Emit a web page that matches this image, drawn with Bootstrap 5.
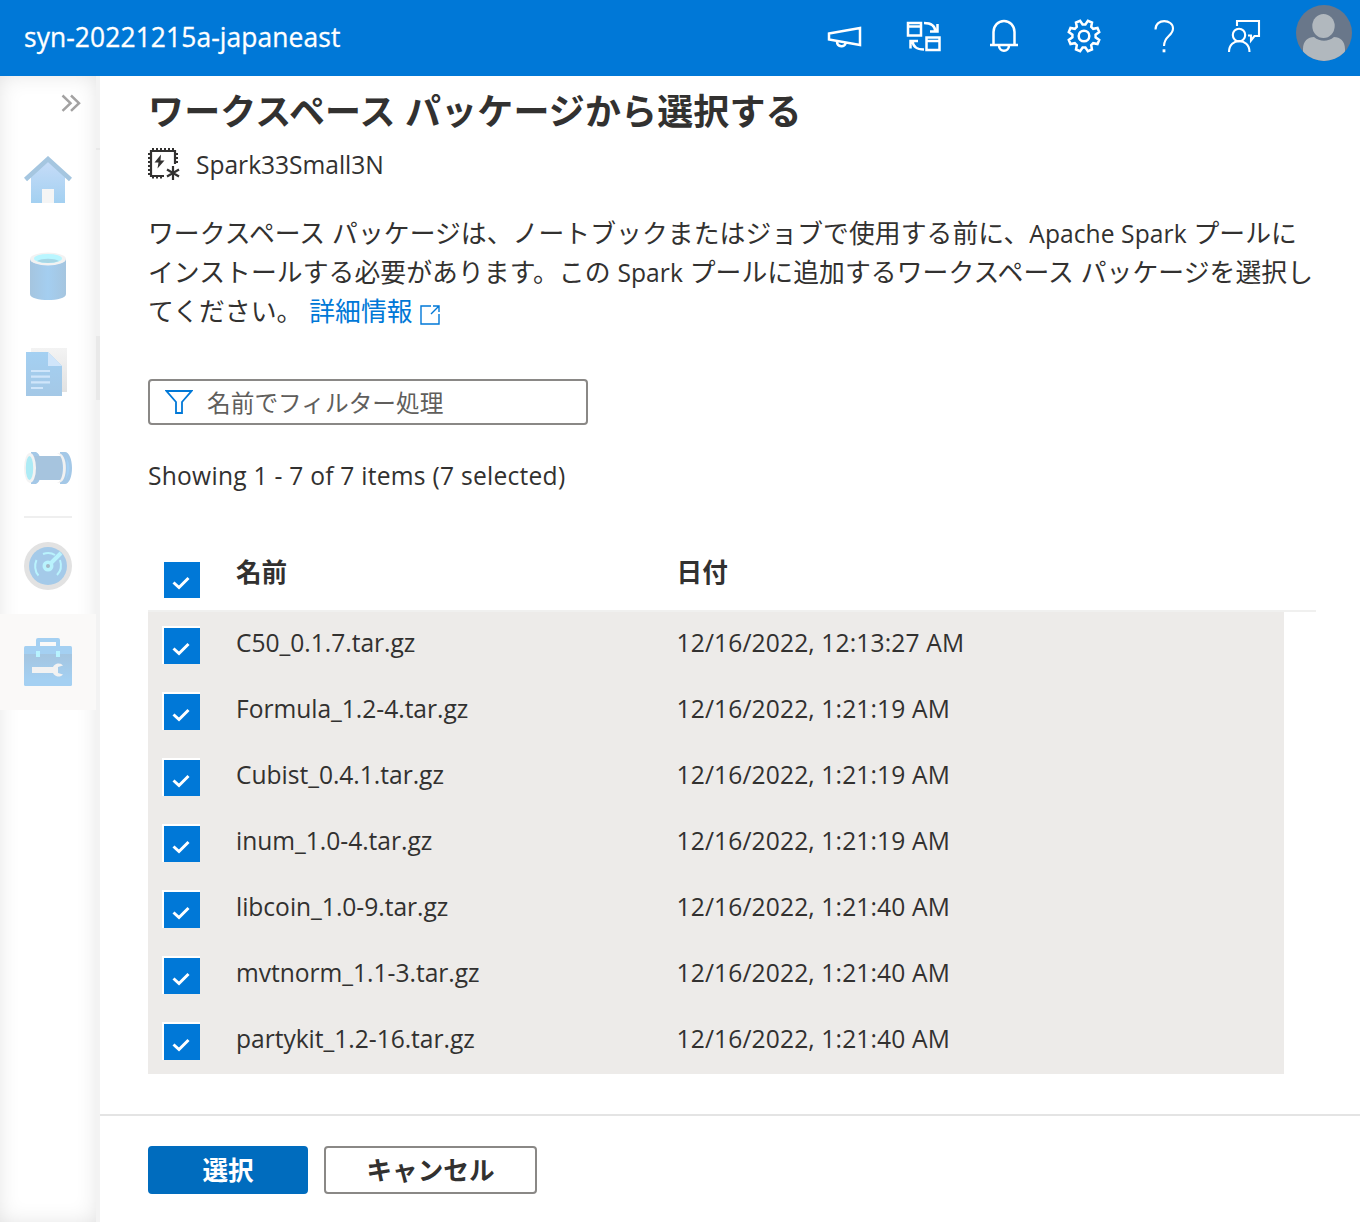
<!DOCTYPE html>
<html lang="ja">
<head>
<meta charset="utf-8">
<title>syn-20221215a-japaneast</title>
<link rel="stylesheet" href="https://cdn.jsdelivr.net/npm/bootstrap@5.3.0/dist/css/bootstrap.min.css">
<style>
body{font-family:"Open Sans","Noto Sans CJK JP",sans-serif;color:#323130;background:#fff;font-size:24.6px;height:1222px;overflow:hidden}
svg{display:block;flex:none}
.topbar{height:76px;background:#0078d7;color:#fff;padding:0 8px 0 24px;flex:none}
.topbar .ws{font-size:26.4px;line-height:36px;letter-spacing:.1px;padding-bottom:3px;-webkit-text-stroke:.3px #fff}
.tools{gap:48px;padding-bottom:4px}
.tools svg{width:32px;height:32px;fill:none;stroke:#fff;stroke-width:2.5;overflow:visible}
.tools svg.fine{stroke-width:2.1}
.tools .avatar{width:56px;height:56px;stroke:none;margin:-6px 0 0 -12px}
.rail{width:100px;flex:none;border-right:4px solid #f3f3f3;position:relative}
.rail-in{height:100%;box-shadow:inset 0 0 26px -6px rgba(0,0,0,.16)}
.rail-notch{position:absolute;left:96px;top:260px;width:4px;height:64px;background:#e9e9e9}
.rail-notch.thin{top:72px;height:2px}
.cell{height:96px}
.cell.active{background:#faf9f8}
.rule{width:48px;height:2px;background:#efefef}
.content{padding:0 44px 0 48px}
h1{font:700 36px/52px "Open Sans","Noto Sans CJK JP",sans-serif;letter-spacing:.13px;margin:10px 0 0;white-space:nowrap}
.pool{height:46px;margin-top:4px;gap:16px}
.pool .nm{line-height:36px;letter-spacing:-.03px}
.desc{font-size:25.8px;line-height:39px;letter-spacing:.075px;margin-top:26px;white-space:nowrap}
.desc .la{font-size:24.6px}
.desc a{color:#0078d7;text-decoration:none}
.desc svg{display:inline-block;vertical-align:-4px}
.filter{width:440px;height:46px;margin-top:48px;border:2px solid #8a8886;border-radius:4px;padding-left:15px;gap:14px;font-size:23.7px;color:#605e5c}
.filter span{padding-top:3px}
.count{margin-top:31px;line-height:40px;height:40px;letter-spacing:.25px}
.grid-head{height:66px;margin-top:50px;width:1168px;border-bottom:2px solid #f0f0ef;font-weight:700;font-size:25.6px}
.grid-row{height:66px;width:1136px;background:#edebe9}
.box{width:36px;height:36px;margin:16px 36px 0 16px;background:#0078d7;flex:none}
.grid-row .box{box-shadow:-1px -1px 0 1px #fff;clip-path:inset(-2px 0 0 -2px)}
.c-name{width:441px;line-height:36px;padding-top:13px;letter-spacing:-.03px}
.c-date{line-height:36px;padding-top:13px;letter-spacing:.13px;margin-left:-.5px}
.grid-head .c-name,.grid-head .c-date{padding-top:9px}
.foot{height:108px;border-top:2px solid #e4e4e4;padding:30px 48px;gap:16px;flex:none}
.foot .btn{height:48px;font-weight:700;font-size:25.6px;line-height:36px;border-radius:4px;padding:5px 0 3px;border-width:2px}
.b-ok{width:160px;background:#006cbe;color:#fff;border-color:#006cbe}
.b-no{width:213px;background:#fff;color:#323130;border-color:#8a8886}
</style>
<script src="https://cdn.jsdelivr.net/npm/bootstrap@5.3.0/dist/js/bootstrap.bundle.min.js"></script>
</head>
<body class="d-flex flex-column">
<svg width="0" height="0" class="position-absolute"><defs>
<symbol id="tick" viewBox="0 0 36 36"><path d="M9.500 20.500l5.500 5L24.500 16" fill="none" stroke="#fff" stroke-width="3"/></symbol>
<linearGradient id="gh" x2="0" y2="1"><stop stop-color="#c6dcf8"/><stop offset="1" stop-color="#a3d0f1"/></linearGradient>
<linearGradient id="gc"><stop stop-color="#a5c5df"/><stop offset=".5" stop-color="#a4cef0"/><stop offset="1" stop-color="#a5c5df"/></linearGradient>
<linearGradient id="gd" x2="0" y2="1"><stop stop-color="#a4d0f2"/><stop offset="1" stop-color="#a4c8e6"/></linearGradient>
<linearGradient id="gp" x2="0" y2="1"><stop stop-color="#f3f3f3"/><stop offset="1" stop-color="#e2e2e2"/></linearGradient>
<linearGradient id="gt" x2="0" y2="1"><stop stop-color="#a4c5e0"/><stop offset="1" stop-color="#a4d0f2"/></linearGradient>
</defs></svg>
<header class="topbar d-flex align-items-center justify-content-between">
  <div class="ws">syn-20221215a-japaneast</div>
  <div class="tools d-flex align-items-center">
    <svg viewBox="0 0 32 32"><path d="M1 13.500L32 8v17L1 19.500zM9 21.500c0 6 8.500 6 8.500 1.500"/></svg>
    <svg viewBox="0 0 32 32"><path d="M0 3h13v12.500H0zM0 6.500h13M18.500 17.500h13V30h-13zM18.500 21h13M16 3c7 0 11 2.500 11.500 8.500M29.500 4v7.500H22M16 29.500c-7 0-11-2.500-11.500-8.500M2.500 28.500V21H10"/></svg>
    <svg viewBox="0 0 32 32"><path d="M2 25h28M5.500 25V12a10.500 11 0 0 1 21 0v13M11 25.500c0 7 10 7 10 0"/></svg>
    <svg viewBox="-16 -16 32 32"><path d="M11.600 1.400L15.200 3.900 13.500 8 9.200 7.200 7.200 9.200 8 13.500 3.900 15.200 1.400 11.600H-1.400L-3.900 15.200-8 13.500-7.200 9.200-9.200 7.200-13.500 8-15.200 3.900-11.600 1.400V-1.400L-15.200-3.900-13.500-8-9.200-7.200-7.200-9.200-8-13.500-3.900-15.200-1.400-11.600H1.400L3.900-15.200 8-13.500 7.200-9.200 9.200-7.200 13.500-8 15.200-3.900 11.600-1.400z"/><circle r="5.300"/></svg>
    <svg class="fine" viewBox="0 0 32 32"><path d="M7.500 9.500C7.500-2 25-1 25 8.500 25 16 16 16 16 26"/><path d="M16 29.300v3" stroke-width="2.800"/></svg>
    <svg class="fine" viewBox="0 0 32 32"><circle cx="11" cy="15" r="6.200"/><path d="M1 32c0-14.500 20.500-14.500 20.500 0M9 6V1h22v15h-4.500L23 20.500V15.500h-3"/></svg>
    <svg class="avatar" viewBox="0 0 56 56"><clipPath id="av"><circle cx="28" cy="28" r="28"/></clipPath><g clip-path="url(#av)"><path fill="#69778a" d="M0 0h56v56H0z"/><ellipse cx="27.500" cy="21" rx="11.200" ry="12" fill="#b1b8be"/><path d="M7 56V44c0-8 5-12 11-12 6 5 14 5 20 0 6 0 11 4 11 12v12z" fill="#b1b8be"/></g></svg>
  </div>
</header>
<div class="d-flex flex-grow-1" style="min-height:0">
<nav class="rail">
  <div class="rail-notch thin"></div><div class="rail-notch"></div>
  <div class="rail-in d-flex flex-column align-items-center">
    <svg width="96" height="56" viewBox="0 0 96 56"><path d="M62.500 19.500l8 7.700-8 7.700M71 19.500l8 7.700-8 7.700" fill="none" stroke="#a3a2a2" stroke-width="2.500"/></svg>
    <div class="cell d-flex align-items-center"><svg width="48" height="48" viewBox="0 0 48 48"><path d="M7 20L24 5l17 15v27H7z" fill="url(#gh)"/><path fill="#f5f5f5" d="M18 33h12v14H18z"/><path d="M1.500 23.500L24 3 46.500 23.500" fill="none" stroke="#a5c6e0" stroke-width="4.500"/></svg></div>
    <div class="cell d-flex align-items-center"><svg width="48" height="48" viewBox="0 0 48 48"><path d="M6 7v35c0 8 36 8 36 0V7z" fill="url(#gc)"/><ellipse cx="24" cy="7" rx="18" ry="6.500" fill="#f2f2f2"/><ellipse cx="24" cy="6.500" rx="14" ry="4.500" fill="#b9f6ff"/><path d="M13 9c5-3 17-3 22 0-5 2.500-17 2.500-22 0z" fill="#a7d6e5"/></svg></div>
    <div class="cell d-flex align-items-center"><svg width="48" height="48" viewBox="0 0 48 48"><path d="M7 0h36v44H7z" fill="url(#gp)"/><path d="M2 4h22l14 14v30H2z" fill="url(#gd)"/><path d="M24 4v14h14z" fill="#d0e5fa"/><path d="M7 23h19M7 28.700h19M7 34.400h19M7 40h12" stroke="#cfe5fa" stroke-width="2.200"/></svg></div>
    <div class="cell d-flex align-items-center"><svg width="48" height="48" viewBox="0 0 48 48"><path d="M7 8h5q4 2 4 7v18q0 5-4 7H7zM36 8h5c4 0 7 7 7 16s-3 16-7 16h-5z" fill="#a4c8e7"/><path d="M10 12h28v24H10z" fill="#a6c4de"/><ellipse cx="6" cy="24" rx="6" ry="15" fill="#f3f3f3"/><ellipse cx="5.500" cy="24" rx="3.700" ry="12" fill="#adebf5"/><path d="M33 9c12-2 12 32 0 30 8-3 8-27 0-30z" fill="#f1f1f1"/><path d="M42 13q7 11 0 22 2-11 0-22z" fill="#a4d0f4"/></svg></div>
    <div class="rule"></div>
    <div class="cell d-flex align-items-center"><svg width="48" height="48" viewBox="0 0 48 48"><circle cx="24" cy="24" r="24" fill="#e2e2e2"/><circle cx="24" cy="24" r="19" fill="#a4cae9"/><path d="M14.500 33.500c-4-4-4-11-2-15.500M19 12c5-2 9-1 12 1M36 18c2 6 1 11-3 15" fill="none" stroke="#b9f3fd" stroke-width="2"/><path d="M24 24L37 11" stroke="#b9f3fd" stroke-width="4"/><circle cx="24" cy="24" r="5.500" fill="#b9f3fd"/><circle cx="24" cy="24" r="2" fill="#a5b7c5"/></svg></div>
    <div class="cell active w-100 d-flex align-items-center justify-content-center"><svg width="48" height="48" viewBox="0 0 48 48"><path d="M14 9V2h20v7" fill="none" stroke="#a4d0f2" stroke-width="4" stroke-linejoin="round"/><rect y="8" width="48" height="40" rx="1.500" fill="#a4d0f2"/><path d="M0 16h48v26H0z" fill="url(#gt)"/><path d="M12 13h4v6h-4zM32 13h4v6h-4z" fill="#b7f3ff"/><path d="M8 29h21a6 6 0 0 1 10-1.500l-5 1.500v6l5 1.500A6 6 0 0 1 29 35H8z" fill="#f2f2f2"/></svg></div>
  </div>
</nav>
<main class="flex-grow-1 d-flex flex-column">
  <section class="content flex-grow-1">
    <h1>ワークスペース パッケージから選択する</h1>
    <div class="pool d-flex align-items-center">
      <svg width="32" height="34" viewBox="0 0 32 34" fill="none" stroke="#323130"><path d="M16 28H3V3h24v13" stroke-width="2.200"/><path d="M4 1h23M4 29.500h12" stroke-width="2" stroke-dasharray="2 2"/><path d="M1 5v23M29 5v12" stroke-width="2" stroke-dasharray="2 2"/><path d="M13 6.500L6.500 14.500h4l-1 6 7-8h-4z" fill="#323130" stroke="none"/><path d="M25 18v14M19 21.500l12 7M31 21.500l-12 7" stroke-width="2.200"/></svg>
      <span class="nm">Spark33Small3N</span>
    </div>
    <div class="desc">ワークスペース パッケージは、ノートブックまたはジョブで使用する前に、<span class="la">Apache Spark</span> プールに<br>インストールする必要があります。この <span class="la">Spark</span> プールに追加するワークスペース パッケージを選択し<br>てください。 <a href="#">詳細情報 <svg width="20" height="20" viewBox="0 0 20 20" fill="none" stroke="#0078d7" stroke-width="1.400"><path d="M11 1H1v18h18V9M13 1h6v6M19 1l-8 8"/></svg></a></div>
    <div class="filter d-flex align-items-center"><svg width="28" height="24" viewBox="0 0 28 24" fill="none" stroke="#0078d7" stroke-width="1.800"><path d="M1.500 1h25L17 12v11h-6V12z"/></svg><span>名前でフィルター処理</span></div>
    <div class="count">Showing 1 - 7 of 7 items (7 selected)</div>
    <div class="grid-head d-flex"><svg class="box"><use href="#tick"/></svg><div class="c-name">名前</div><div class="c-date">日付</div></div>
    <div class="grid-row d-flex"><svg class="box"><use href="#tick"/></svg><div class="c-name">C50_0.1.7.tar.gz</div><div class="c-date">12/16/2022, 12:13:27 AM</div></div>
    <div class="grid-row d-flex"><svg class="box"><use href="#tick"/></svg><div class="c-name">Formula_1.2-4.tar.gz</div><div class="c-date">12/16/2022, 1:21:19 AM</div></div>
    <div class="grid-row d-flex"><svg class="box"><use href="#tick"/></svg><div class="c-name">Cubist_0.4.1.tar.gz</div><div class="c-date">12/16/2022, 1:21:19 AM</div></div>
    <div class="grid-row d-flex"><svg class="box"><use href="#tick"/></svg><div class="c-name">inum_1.0-4.tar.gz</div><div class="c-date">12/16/2022, 1:21:19 AM</div></div>
    <div class="grid-row d-flex"><svg class="box"><use href="#tick"/></svg><div class="c-name">libcoin_1.0-9.tar.gz</div><div class="c-date">12/16/2022, 1:21:40 AM</div></div>
    <div class="grid-row d-flex"><svg class="box"><use href="#tick"/></svg><div class="c-name">mvtnorm_1.1-3.tar.gz</div><div class="c-date">12/16/2022, 1:21:40 AM</div></div>
    <div class="grid-row d-flex"><svg class="box"><use href="#tick"/></svg><div class="c-name">partykit_1.2-16.tar.gz</div><div class="c-date">12/16/2022, 1:21:40 AM</div></div>
  </section>
  <footer class="foot d-flex"><button class="btn b-ok">選択</button><button class="btn b-no">キャンセル</button></footer>
</main>
</div>
</body>
</html>
